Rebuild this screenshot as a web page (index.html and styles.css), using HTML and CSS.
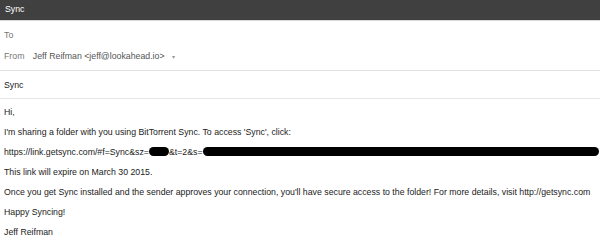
FILE: index.html
```html
<!DOCTYPE html>
<html>
<head>
    <title>Sync</title>
    <link rel="stylesheet" href="styles.css">
</head>
<body>
    <div class="compose">
        <div class="title-bar">Sync</div>
        <div class="recipients">
            <div class="field">To</div>
            <div class="field">
                <span class="label">From</span>
                <span class="sender">Jeff Reifman &lt;jeff@lookahead.io&gt;</span>
                <span class="caret">&#9662;</span>
            </div>
        </div>
        <div class="subject">Sync</div>
        <div class="message">
            <p>Hi,</p>
            <p>I'm sharing a folder with you using BitTorrent Sync. To access 'Sync', click:</p>
            <p class="link">https://link.getsync.com/#f=Sync&amp;sz=<span class="redact short"></span>&amp;t=2&amp;s=<span class="redact long"></span></p>
            <p>This link will expire on March 30 2015.</p>
            <p>Once you get Sync installed and the sender approves your connection, you'll have secure access to the folder! For more details, visit http://getsync.com</p>
            <p>Happy Syncing!</p>
            <p>Jeff Reifman</p>
        </div>
    </div>
</body>
</html>
```

FILE: styles.css
```css
body {
    margin: 0;
    font-family: "Liberation Sans", Arial, sans-serif;
    font-size: 8.75px;
    color: #222;
    background-color: #fff;
}
.title-bar {
    height: 21px;
    line-height: 19px;
    padding-left: 5px;
    background-color: #404040;
    color: #fff;
    border-bottom: 1px solid #d8d8d8;
    box-sizing: border-box;
}
.recipients {
    padding: 3px 0 4px 0;
    border-bottom: 1px solid #e0e0e0;
}
.field {
    height: 21px;
    line-height: 22px;
    padding-left: 4px;
    color: #777;
}
.field .label {
    margin-right: 6px;
}
.field .sender {
    color: #555;
}
.field .caret {
    margin-left: 5px;
    font-size: 6px;
    color: #999;
}
.subject {
    height: 27px;
    line-height: 28px;
    padding-left: 4px;
    border-bottom: 1px solid #e6e6e6;
}
.message {
    padding: 3px 0 0 4px;
}
.message p {
    margin: 0;
    height: 20px;
    line-height: 20px;
    white-space: nowrap;
}
.redact {
    display: inline-block;
    height: 9px;
    background-color: #000;
    border-radius: 5px;
    vertical-align: -1px;
}
.redact.short {
    width: 20px;
}
.redact.long {
    width: 396px;
}
```
